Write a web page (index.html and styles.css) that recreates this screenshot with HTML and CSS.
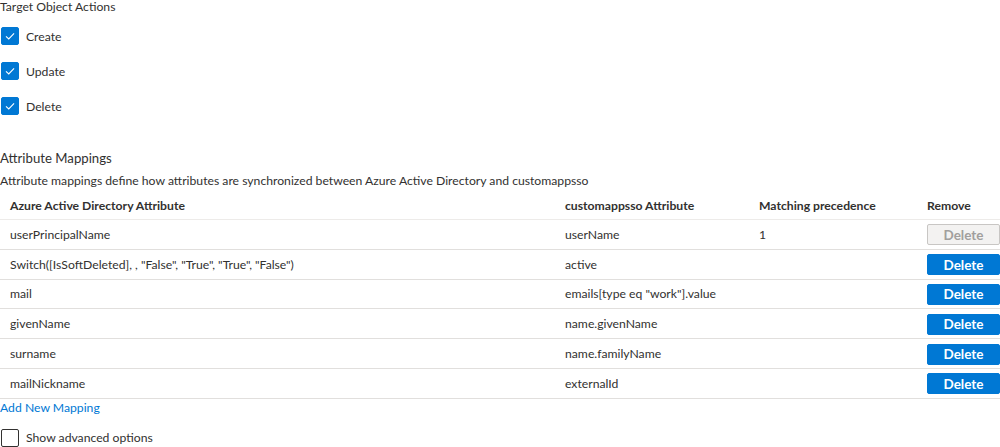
FILE: index.html
```html
<!DOCTYPE html>
<html>
<head>
<meta charset="utf-8">
<link rel="stylesheet" href="styles.css">
</head>
<body>
<div class="page">
  <div class="section-title">Target Object Actions</div>
  <div class="checks">
    <label class="check"><span class="box on"><svg viewBox="0 0 18 18" width="18" height="18"><path d="M4.5 9.3 L7.6 12.3 L13.6 6" fill="none" stroke="#fff" stroke-width="1.2"/></svg></span><span>Create</span></label>
    <label class="check"><span class="box on"><svg viewBox="0 0 18 18" width="18" height="18"><path d="M4.5 9.3 L7.6 12.3 L13.6 6" fill="none" stroke="#fff" stroke-width="1.2"/></svg></span><span>Update</span></label>
    <label class="check"><span class="box on"><svg viewBox="0 0 18 18" width="18" height="18"><path d="M4.5 9.3 L7.6 12.3 L13.6 6" fill="none" stroke="#fff" stroke-width="1.2"/></svg></span><span>Delete</span></label>
  </div>

  <div class="map-title">Attribute Mappings</div>
  <div class="map-desc">Attribute mappings define how attributes are synchronized between Azure Active Directory and customappsso</div>

  <div class="table">
    <div class="row head">
      <div class="cell">Azure Active Directory Attribute</div>
      <div class="cell">customappsso Attribute</div>
      <div class="cell">Matching precedence</div>
      <div class="cell">Remove</div>
    </div>
    <div class="row">
      <div class="cell">userPrincipalName</div>
      <div class="cell">userName</div>
      <div class="cell">1</div>
      <div class="cell"><button class="btn disabled">Delete</button></div>
    </div>
    <div class="row">
      <div class="cell">Switch([IsSoftDeleted], , "False", "True", "True", "False")</div>
      <div class="cell">active</div>
      <div class="cell"></div>
      <div class="cell"><button class="btn">Delete</button></div>
    </div>
    <div class="row">
      <div class="cell">mail</div>
      <div class="cell">emails[type eq "work"].value</div>
      <div class="cell"></div>
      <div class="cell"><button class="btn">Delete</button></div>
    </div>
    <div class="row">
      <div class="cell">givenName</div>
      <div class="cell">name.givenName</div>
      <div class="cell"></div>
      <div class="cell"><button class="btn">Delete</button></div>
    </div>
    <div class="row">
      <div class="cell">surname</div>
      <div class="cell">name.familyName</div>
      <div class="cell"></div>
      <div class="cell"><button class="btn">Delete</button></div>
    </div>
    <div class="row">
      <div class="cell">mailNickname</div>
      <div class="cell">externalId</div>
      <div class="cell"></div>
      <div class="cell"><button class="btn">Delete</button></div>
    </div>
  </div>

  <a class="add-link" href="#">Add New Mapping</a>

  <label class="check adv"><span class="box"></span><span>Show advanced options</span></label>
</div>
</body>
</html>
```

FILE: styles.css
```css
* { box-sizing: border-box; }
html, body { margin: 0; padding: 0; background: #fff; }
body {
  font-family: "Lato", "Open Sans", "Liberation Sans", sans-serif;
  font-size: 12.2px;
  color: #323130;
  width: 1000px;
  height: 447px;
  overflow: hidden;
}
.page { display: flex; flex-direction: column; }

.section-title { line-height: 14px; height: 14px; }

.checks { display: flex; flex-direction: column; padding-top: 13px; }
.check { display: flex; align-items: center; gap: 7px; height: 18px; margin-bottom: 17px; padding-left: 1px; }
.box {
  width: 18px; height: 18px; border-radius: 2px;
  border: 1px solid #323130;
  display: flex; align-items: center; justify-content: center;
  flex: none;
}
.box.on { background: #0078d4; border-color: #0078d4; }
.box svg { display: block; }

.map-title { font-size: 13.2px; line-height: 18px; margin-top: 17px; }
.map-desc { line-height: 16px; margin-top: 6px; }

.table { display: flex; flex-direction: column; margin-top: 3px; }
.row {
  display: grid;
  grid-template-columns: 555px 194px 168px 83px;
  align-items: center;
  height: 29.8px;
  border-bottom: 1px solid #e1dfdd;
}
.row.head { font-weight: 700; height: 28px; border-bottom-color: #edebe9; }
.cell { padding-left: 10px; white-space: nowrap; }

.btn {
  width: 73px; height: 21px;
  font-family: inherit; font-size: 13.5px; font-weight: 700;
  border: 1px solid #0078d4; border-radius: 2px;
  background: #0078d4; color: #fff;
  padding: 0; display: block;
  margin-top: 1px;
}
.btn.disabled { background: #f3f2f1; border-color: #c8c6c4; color: #a19f9d; }

.add-link { color: #0078d4; text-decoration: none; line-height: 16px; margin-top: 1px; }

.check.adv { margin-top: 13px; margin-bottom: 0; }
.check.adv .box { border-color: #323130; }
```
